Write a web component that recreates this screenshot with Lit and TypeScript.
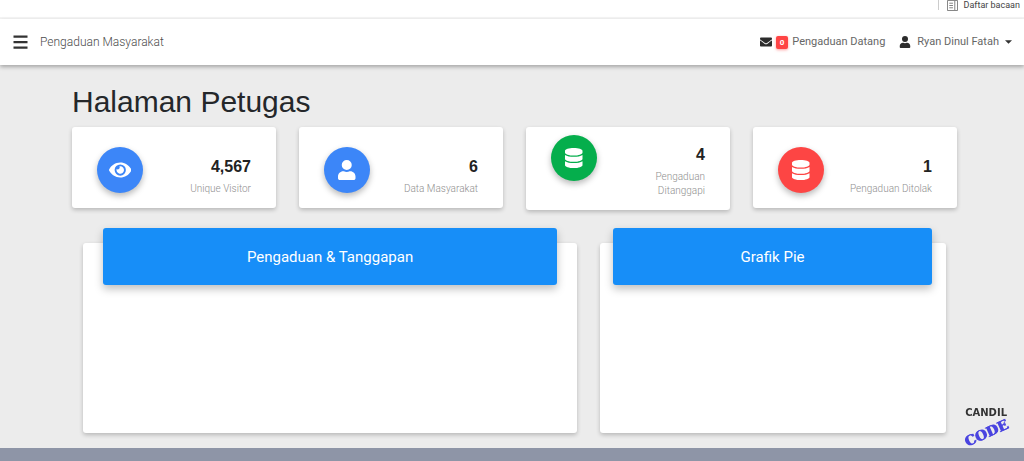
import { LitElement, html, css, svg, nothing } from "lit";
import { customElement, property } from "lit/decorators.js";

const ICONS: Record<string, { box: string; body: unknown }> = {
  bars: {
    box: "0 0 16 16",
    body: svg`<path d="M1 1.400h14v2.300H1zM1 6.900h14v2.300H1zM1 12.400h14v2.300H1z"/>`,
  },
  envelope: {
    box: "0 0 512 512",
    body: svg`<path d="M502.3 190.8c3.9-3.1 9.7-.2 9.7 4.7V400c0 26.5-21.5 48-48 48H48c-26.500 0-48-21.500-48-48V195.600c0-5 5.700-7.800 9.700-4.700 22.400 17.400 52.100 39.500 154.100 113.600 21.100 15.400 56.700 47.800 92.200 47.600 35.700.300 72-32.800 92.300-47.600 102-74.100 131.600-96.300 154-113.700zM256 320c23.200.400 56.600-29.200 73.400-41.400 132.700-96.300 142.800-104.700 173.400-128.700 5.800-4.500 9.200-11.500 9.200-18.900v-19c0-26.500-21.500-48-48-48H48c-26.500 0-48 21.500-48 48v19c0 7.400 3.400 14.300 9.200 18.900 30.600 23.900 40.700 32.400 173.400 128.700 16.800 12.200 50.200 41.800 73.400 41.400z"/>`,
  },
  user: {
    box: "0 0 448 512",
    body: svg`<path d="M224 256a128 128 0 1 0 0-256 128 128 0 1 0 0 256zm89.600 32h-16.700c-22.200 10.200-46.900 16-72.900 16s-50.600-5.800-72.900-16h-16.700C60.200 288 0 348.200 0 422.400V464c0 26.500 21.500 48 48 48h352c26.500 0 48-21.500 48-48v-41.600c0-74.200-60.200-134.400-134.400-134.400z"/>`,
  },
  eye: {
    box: "0 0 576 512",
    body: svg`<path d="M572.500 241.400C518.300 135.600 410.900 64 288 64S57.700 135.600 3.500 241.400a32.400 32.400 0 0 0 0 29.200C57.700 376.400 165.100 448 288 448s230.300-71.600 284.500-177.400a32.400 32.400 0 0 0 0-29.200zM288 400a144 144 0 1 1 144-144 143.900 143.900 0 0 1-144 144zm0-240a95.300 95.300 0 0 0-25.300 3.800 47.900 47.900 0 0 1-66.900 66.900A95.800 95.800 0 1 0 288 160z"/>`,
  },
  database: {
    box: "0 0 448 512",
    body: svg`<path d="M448 73.100v45.800C448 159.100 347.700 192 224 192S0 159.100 0 118.900V73.100C0 32.900 100.300 0 224 0s224 32.900 224 73.100zM448 176v102.900C448 319.100 347.700 352 224 352S0 319.100 0 278.900V176c48.100 33.100 136.200 48.600 224 48.600S399.900 209.100 448 176zm0 160v102.900C448 479.100 347.700 512 224 512S0 479.100 0 438.900V336c48.100 33.100 136.200 48.600 224 48.600S399.900 369.100 448 336z"/>`,
  },
  list: {
    box: "0 0 12 12",
    body: svg`<path fill="none" stroke="currentColor" d="M.5.5h11v11H.5zM2.500 3.500h4M2.500 6h4M2.500 8.500h4M8.500 1v10"/>`,
  },
  caret: { box: "0 0 8 4", body: svg`<path d="M0 0h8L4 4z"/>` },
};

const icon = (name: string, cls: string) =>
  html`<svg class=${cls} viewBox=${ICONS[name].box} fill="currentColor" aria-hidden="true">${ICONS[name].body}</svg>`;

@customElement("stat-card")
class StatCard extends LitElement {
  @property() icon = "eye";
  @property() tone = "blue";
  @property() value = "";
  @property() label = "";

  static styles = css`
    :host {
      display: flex;
      align-items: flex-start;
      justify-content: space-between;
      box-sizing: border-box;
      padding: 20px 25px 12px;
      background: #fff;
      border-radius: 3px;
      box-shadow: 0 2px 4px rgba(0, 0, 0, 0.22);
    }
    :host([wrapped]) {
      padding-top: 8px;
    }
    .disc {
      display: grid;
      place-items: center;
      flex: none;
      width: 46px;
      height: 46px;
      border-radius: 50%;
      color: #fff;
      box-shadow: 0 3px 6px rgba(0, 0, 0, 0.28);
    }
    .blue { background: #3c86f8; }
    .green { background: #05ae4c; }
    .red { background: #fd4544; }
    .glyph { height: 20px; }
    .text {
      padding-top: 9px;
      text-align: right;
    }
    .value {
      margin: 0;
      font: 700 16px/22px "Liberation Sans", Arial, sans-serif;
      color: #222;
    }
    .label {
      margin: 4px 0 0;
      font: 300 10px/14px Roboto, sans-serif;
      color: #8f8f8f;
    }
    :host([wrapped]) .label {
      width: min-content;
      margin-left: auto;
    }
  `;

  render() {
    return html`
      <div class="disc ${this.tone}">${icon(this.icon, "glyph")}</div>
      <div class="text">
        <p class="value">${this.value}</p>
        <p class="label">${this.label}</p>
      </div>
    `;
  }
}

@customElement("chart-panel")
class ChartPanel extends LitElement {
  @property() heading = "";

  static styles = css`
    :host {
      display: block;
      min-height: 190px;
      background: #fff;
      border-radius: 3px;
      box-shadow: 0 2px 4px rgba(0, 0, 0, 0.22);
    }
    .head {
      margin: -15px var(--head-end, 20px) 0 var(--head-start, 20px);
      padding: 19px 12px 17px;
      border-radius: 3px;
      background: #178ef8;
      color: #fff;
      font: 400 15px/21px Roboto, sans-serif;
      text-align: center;
      box-shadow: 0 4px 8px rgba(0, 0, 0, 0.25);
    }
  `;

  render() {
    return html`<h2 class="head">${this.heading}</h2>`;
  }
}

const STATS = [
  { icon: "eye", tone: "blue", value: "4,567", label: "Unique Visitor" },
  { icon: "user", tone: "blue", value: "6", label: "Data Masyarakat" },
  { icon: "database", tone: "green", value: "4", label: "Pengaduan Ditanggapi", wrapped: true },
  { icon: "database", tone: "red", value: "1", label: "Pengaduan Ditolak" },
];

@customElement("app-root")
class AppRoot extends LitElement {
  static styles = css`
    :host {
      display: flex;
      flex-direction: column;
      min-height: 100vh;
      background: #ececec;
      font-family: Roboto, sans-serif;
      color: #4c4c4c;
    }
    .bookmarks {
      display: flex;
      align-items: flex-start;
      justify-content: flex-end;
      box-sizing: border-box;
      height: 19px;
      padding-right: 4px;
      background: #fff;
      border-bottom: 2px solid #f5f5f5;
    }
    .reading {
      display: flex;
      align-items: center;
      gap: 6px;
      height: 10px;
      padding-left: 8px;
      border-left: 1px solid #ccc;
      color: #444;
      font: 400 9px/10px Roboto, sans-serif;
      text-decoration: none;
    }
    .list { width: 11px; height: 11px; color: #777; }
    .nav {
      display: flex;
      align-items: center;
      height: 46px;
      padding: 0 12px;
      background: #fff;
      font-weight: 300;
      font-size: 12px;
      line-height: 16px;
      box-shadow: 0 2px 4px rgba(0, 0, 0, 0.3);
    }
    .toggle {
      display: flex;
      margin: 0 11px 0 0;
      padding: 0;
      border: 0;
      background: none;
      color: #333;
    }
    .bars { width: 17px; height: 16px; }
    .nav a {
      display: flex;
      align-items: center;
      color: inherit;
      text-decoration: none;
    }
    .nav .inbox,
    .nav .account {
      gap: 4px;
      font-weight: 400;
      font-size: 11px;
      color: #666;
    }
    .nav .inbox { margin-left: auto; }
    .nav .account {
      gap: 6px;
      margin-left: 14px;
    }
    .envelope, .person { width: 12px; height: 12px; color: #2c2c2c; }
    .badge {
      padding: 0 4px;
      border-radius: 2px;
      background: #f44;
      color: #fff;
      font-weight: 700;
      font-size: 8px;
      line-height: 13px;
      box-shadow: 0 1px 3px rgba(255, 68, 68, 0.5);
    }
    .caret { width: 7px; height: 4px; color: #333; }
    .main {
      flex: 1;
      padding: 19px 67px 15px 72px;
    }
    .title {
      margin: 0 0 7px;
      font: 400 30px/36px "Liberation Sans", Arial, sans-serif;
      color: #24272a;
    }
    .stats {
      display: grid;
      grid-template-columns: repeat(4, minmax(0, 1fr));
      align-items: start;
      gap: 23px;
    }
    .charts {
      display: grid;
      grid-template-columns: minmax(0, 10fr) minmax(0, 7fr);
      gap: 23px;
      padding: 33px 11px 0;
    }
    .pie {
      --head-start: 13px;
      --head-end: 14px;
    }
    .foot {
      height: 13px;
      background: #8e95a7;
    }
    .mark {
      position: fixed;
      right: 15px;
      bottom: 14px;
      display: grid;
      justify-items: center;
      width: 46px;
    }
    .mark-top {
      font: 700 10px/12px "DejaVu Sans", sans-serif;
      color: #333;
    }
    .mark-bottom {
      font: 700 14px/28px "DejaVu Serif", serif;
      color: #4a44e0;
      text-shadow: 1px 0 #4a44e0;
      transform: rotate(-24deg);
    }
  `;

  render() {
    return html`
      <div class="bookmarks">
        <a class="reading" href="#">${icon("list", "list")}<span>Daftar bacaan</span></a>
      </div>
      <nav class="nav">
        <button class="toggle" type="button" aria-label="Menu">${icon("bars", "bars")}</button>
        <a href="#">Pengaduan Masyarakat</a>
        <a class="inbox" href="#">
          ${icon("envelope", "envelope")}<span class="badge">0</span><span>Pengaduan Datang</span>
        </a>
        <a class="account" href="#">
          ${icon("user", "person")}<span>Ryan Dinul Fatah</span>${icon("caret", "caret")}
        </a>
      </nav>
      <main class="main">
        <h1 class="title">Halaman Petugas</h1>
        <section class="stats">
          ${STATS.map(
            (s) => html`<stat-card
              icon=${s.icon}
              tone=${s.tone}
              value=${s.value}
              label=${s.label}
              wrapped=${s.wrapped ? "" : nothing}
            ></stat-card>`
          )}
        </section>
        <section class="charts">
          <chart-panel heading="Pengaduan &amp; Tanggapan"></chart-panel>
          <chart-panel class="pie" heading="Grafik Pie"></chart-panel>
        </section>
      </main>
      <footer class="foot"></footer>
      <div class="mark">
        <span class="mark-top">CANDIL</span>
        <span class="mark-bottom">CODE</span>
      </div>
    `;
  }
}
